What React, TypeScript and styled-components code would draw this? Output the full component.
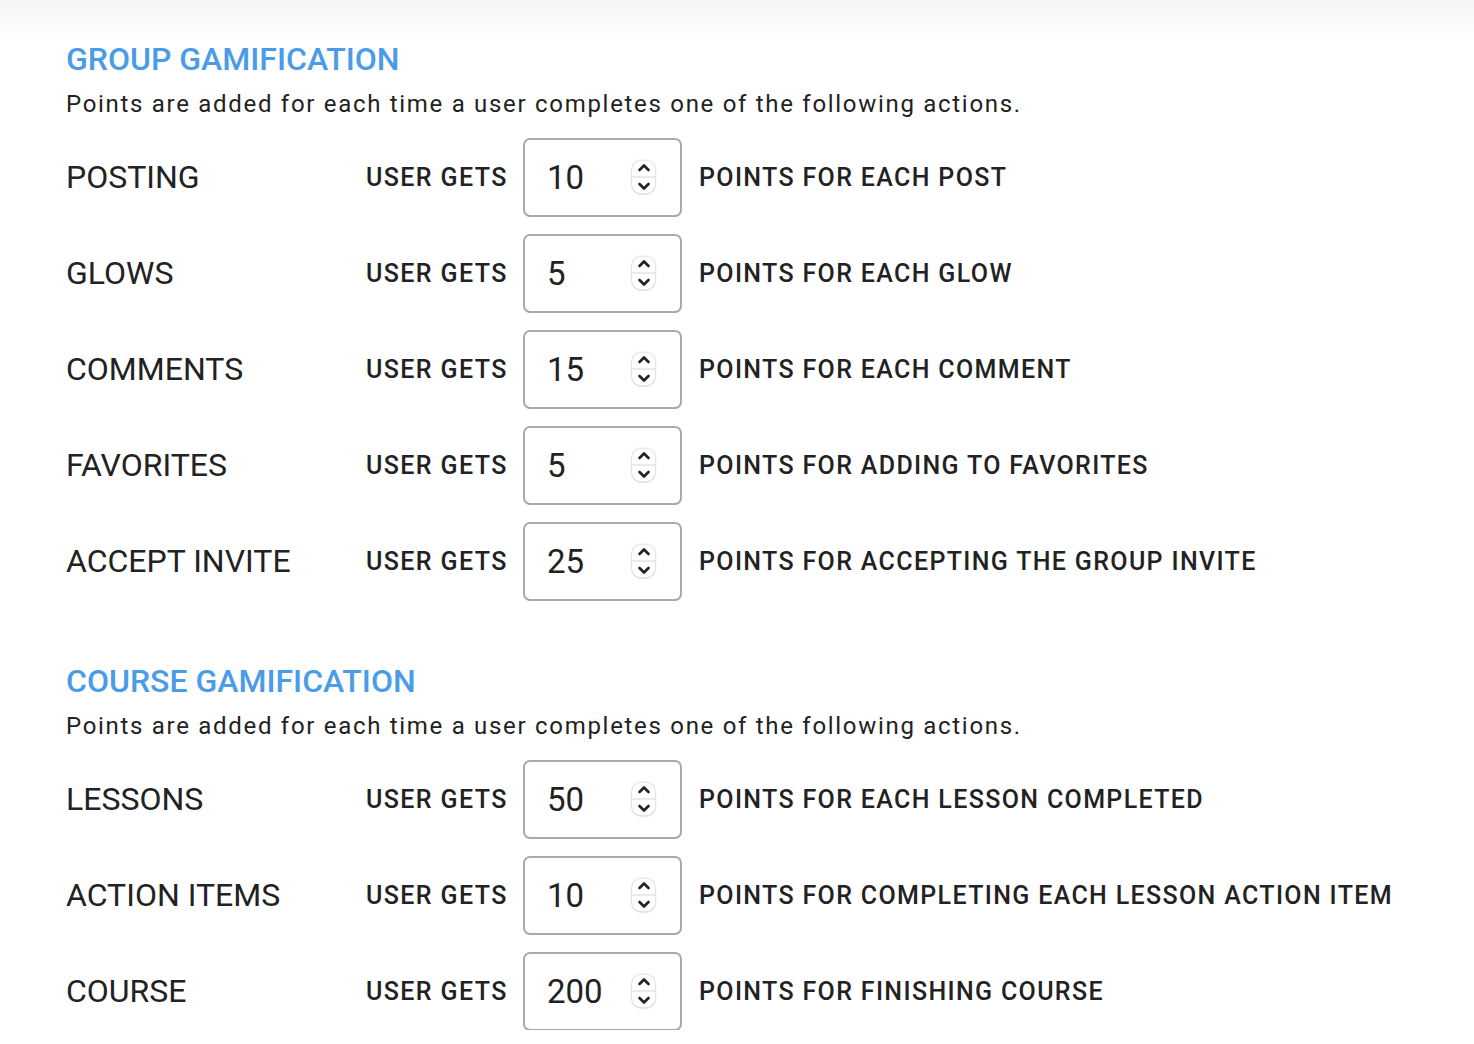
import React from 'react';
import styled, { createGlobalStyle } from 'styled-components';

type Rule = { id: string; label: string; value: number; points: string };

const groupRules: Rule[] = [
  { id: 'posting', label: 'POSTING', value: 10, points: 'POINTS FOR EACH POST' },
  { id: 'glows', label: 'GLOWS', value: 5, points: 'POINTS FOR EACH GLOW' },
  { id: 'comments', label: 'COMMENTS', value: 15, points: 'POINTS FOR EACH COMMENT' },
  { id: 'favorites', label: 'FAVORITES', value: 5, points: 'POINTS FOR ADDING TO FAVORITES' },
  {
    id: 'invite',
    label: 'ACCEPT INVITE',
    value: 25,
    points: 'POINTS FOR ACCEPTING THE GROUP INVITE',
  },
];

const courseRules: Rule[] = [
  { id: 'lessons', label: 'LESSONS', value: 50, points: 'POINTS FOR EACH LESSON COMPLETED' },
  {
    id: 'actions',
    label: 'ACTION ITEMS',
    value: 10,
    points: 'POINTS FOR COMPLETING EACH LESSON ACTION ITEM',
  },
  { id: 'course', label: 'COURSE', value: 200, points: 'POINTS FOR FINISHING COURSE' },
];

// stepper drawn by hand, the native one looks different in chromium
const Spinner = () => (
  <SpinBox>
    <svg width="14" height="10" viewBox="0 0 14 10">
      <path
        d="M2.5 7.5 L7 3 L11.5 7.5"
        fill="none"
        stroke="#222"
        strokeWidth="2.6"
        strokeLinecap="round"
        strokeLinejoin="round"
      />
    </svg>
    <SpinDivider />
    <svg width="14" height="10" viewBox="0 0 14 10">
      <path
        d="M2.5 2.5 L7 7 L11.5 2.5"
        fill="none"
        stroke="#222"
        strokeWidth="2.6"
        strokeLinecap="round"
        strokeLinejoin="round"
      />
    </svg>
  </SpinBox>
);

const RuleRow: React.FC<{ rule: Rule }> = ({ rule }) => (
  <Row>
    <Label>{rule.label}</Label>
    <Gets>USER GETS</Gets>
    <InputWrap>
      <NumberInput type="number" defaultValue={rule.value} aria-label={rule.label} />
      <Spinner />
    </InputWrap>
    <Points>{rule.points}</Points>
  </Row>
);

const Section: React.FC<{ title: string; rules: Rule[] }> = ({ title, rules }) => (
  <SectionBox>
    <Title>{title}</Title>
    <Desc>Points are added for each time a user completes one of the following actions.</Desc>
    <Rows>
      {rules.map((r) => (
        <RuleRow key={r.id} rule={r} />
      ))}
    </Rows>
  </SectionBox>
);

const App: React.FC = () => (
  <>
    <GlobalStyle />
    <TopShade />
    <Page>
      <Section title="GROUP GAMIFICATION" rules={groupRules} />
      <Section title="COURSE GAMIFICATION" rules={courseRules} />
    </Page>
  </>
);

const GlobalStyle = createGlobalStyle`
  body {
    margin: 0;
    background: #fff;
    font-family: Roboto, "Liberation Sans", sans-serif;
    color: #222;
  }
`;

const TopShade = styled.div`
  height: 40px;
  margin-bottom: -40px;
  background: linear-gradient(#f4f4f6, #fff);
`;

const Page = styled.div`
  position: relative;
  padding: 40px 0 0 66px;
  display: flex;
  flex-direction: column;
  gap: 62px;
`;

const SectionBox = styled.section`
  display: flex;
  flex-direction: column;
`;

const Title = styled.h2`
  margin: 0;
  font-size: 32px;
  line-height: 38px;
  font-weight: 500;
  color: #4a9be8;
`;

const Desc = styled.p`
  margin: 12px 0 0;
  font-size: 24px;
  line-height: 28px;
  letter-spacing: 1.7px;
  color: #222;
`;

const Rows = styled.div`
  margin-top: 20px;
  display: flex;
  flex-direction: column;
  gap: 18px;
`;

const Row = styled.div`
  display: flex;
  align-items: center;
  height: 78px;
`;

const Label = styled.div`
  width: 300px;
  font-size: 32px;
  color: #222;
`;

const Gets = styled.div`
  width: 157px;
  font-size: 25px;
  font-weight: 500;
  letter-spacing: 1.4px;
  color: #222;
`;

const InputWrap = styled.div`
  position: relative;
  width: 159px;
  height: 79px;
  box-sizing: border-box;
  border: 2px solid #a9a9a9;
  border-radius: 7px;
  margin-right: 17px;
`;

const NumberInput = styled.input`
  width: 100%;
  height: 100%;
  box-sizing: border-box;
  border: none;
  outline: none;
  background: transparent;
  padding: 0 0 0 22px;
  font-family: inherit;
  font-size: 33px;
  color: #222;
  -moz-appearance: textfield;
  &::-webkit-inner-spin-button,
  &::-webkit-outer-spin-button {
    -webkit-appearance: none;
    margin: 0;
  }
`;

const SpinBox = styled.div`
  position: absolute;
  right: 25px;
  top: 50%;
  transform: translateY(-50%);
  width: 23px;
  height: 33px;
  border-radius: 9px;
  background: #fff;
  box-shadow: 0 0 2px rgba(0, 0, 0, 0.3), 0 1px 2px rgba(0, 0, 0, 0.1);
  display: flex;
  flex-direction: column;
  align-items: center;
  justify-content: space-around;
  pointer-events: none;
`;

const SpinDivider = styled.div`
  width: 100%;
  height: 1px;
  background: #d8d8d8;
`;

const Points = styled.div`
  font-size: 25px;
  font-weight: 500;
  letter-spacing: 1.35px;
  color: #222;
`;

export default App;
